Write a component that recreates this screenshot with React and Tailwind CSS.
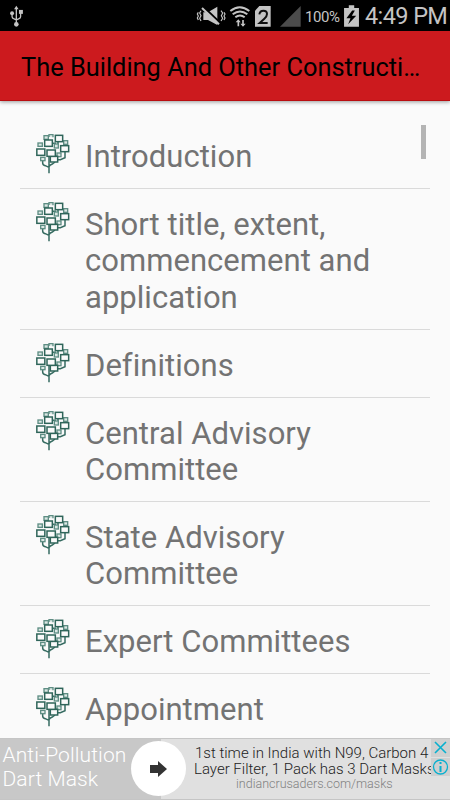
import React from 'react';

const sections = [
  ['Introduction'],
  ['Short title, extent,', 'commencement and', 'application'],
  ['Definitions'],
  ['Central Advisory', 'Committee'],
  ['State Advisory', 'Committee'],
  ['Expert Committees'],
  ['Appointment'],
];

function TreeIcon() {
  return (
    <svg viewBox="33 33 102 123" className="h-[41px] w-[34px] shrink-0" fill="none">
      <g strokeWidth="4.5" stroke="#366b61">
        <path d="M72 154V104M53 116v7q0 6 8 8l11 5M72 134q2-5 10-8l8-6M97 113h9l14-6V90M90 103h17M83 64h10M99 58v14" />
      </g>
      <g strokeWidth="4" stroke="#5f8e84" fill="#dce8e5">
        <rect x="39" y="63" width="13" height="10" />
        <rect x="57" y="41" width="13" height="11" />
        <path d="M72 45v-7h12v8" />
        <rect x="88" y="66" width="12" height="12" />
        <rect x="116" y="56" width="12" height="11" />
        <rect x="47" y="106" width="13" height="10" />
        <rect x="96" y="93" width="12" height="11" />
      </g>
      <g strokeWidth="4.5" stroke="#2f655a" fill="#fafafa">
        <rect x="76" y="103" width="22" height="17" />
        <rect x="91" y="40" width="22" height="19" />
        <rect x="59" y="54" width="23" height="19" />
        <rect x="107" y="71" width="24" height="18" />
        <rect x="35.5" y="81" width="24" height="19" />
        <rect x="66" y="84" width="25" height="19" />
      </g>
    </svg>
  );
}

function StatusBar() {
  return (
    <div className="flex h-[31px] items-start bg-black text-[#c4c4c4]">
      <svg viewBox="27 15 45 67" className="mt-[5px] ml-[9px] h-[22px] w-[15px] shrink-0" fill="none" stroke="#c4c4c4" strokeWidth="4">
        <path d="M49 76V24M36 41v10q0 5 6 6l7 3M62 36v15q0 5-6 6l-7 3" />
        <g fill="#c4c4c4" stroke="none">
          <path d="M42 28l7-11 7 11z" />
          <circle cx="36" cy="40" r="6" />
          <path d="M57 30h12v12H57z" />
          <circle cx="49" cy="74" r="7" />
        </g>
      </svg>

      <svg viewBox="18 12 318 72" className="mt-[4px] ml-[172px] h-[24px] w-[106px] shrink-0" fill="none" stroke="#c4c4c4">
        <path d="M40 37h14l28-17v55L54 60H40z" fill="#c4c4c4" stroke="none" />
        <path d="M40 20l52 50" stroke="#000" strokeWidth="6" />
        <path d="M36 24l51 49" strokeWidth="6" />
        <path d="M33 32l-4 7 4 8-4 8 4 8M25 37l-3 5 3 6-3 6 3 6M93 32l5 7-4 8 4 8-5 8M102 37l3 5-3 6 3 6-3 6" strokeWidth="3.5" />
        <path d="M121 33q28-23 57 0M128 43q22-17 44 0M136 52q14-11 28 0" strokeWidth="6" />
        <path d="M145 79V62M159 60v17" strokeWidth="5" />
        <path d="M137 67l8-9 7 9zM151 71l8 9 8-9z" fill="#c4c4c4" stroke="none" />
        <path d="M208 18h34v62h-47V32z" fill="#c4c4c4" stroke="none" />
        <path d="M208 43q2-11 12-11 11 0 11 10 0 7-8 14l-14 13h24" stroke="#111" strokeWidth="6" />
        <path d="M332 18v62h-62z" fill="#4b4b4b" stroke="none" />
      </svg>

      <span className="mt-[7px] ml-[3px] w-[37px] shrink-0 whitespace-nowrap text-[15px] leading-[20px] tracking-[-0.4px]">100%</span>
      <svg viewBox="132 14 44 65" className="mt-[5px] ml-[2px] h-[22px] w-[15px] shrink-0">
        <path d="M146 15h16v8h14v55h-44V23h14z" fill="#c4c4c4" />
        <path d="M156 30l-17 23h12l-7 18 24-25h-13l9-16z" fill="#000" />
      </svg>
      <span className="ml-[6px] whitespace-nowrap text-[23.5px] leading-[33px] tracking-[-0.6px]">4:49 PM</span>
    </div>
  );
}

function AdBanner() {
  return (
    <div className="relative flex h-[62px] border-y border-[#c5c5c5] bg-[#e0e0e0] font-light">
      <div className="w-[161px] bg-[#c8c8c8] pt-[4px] pl-[2.5px] text-[21px] leading-[24px] tracking-[0.1px] whitespace-nowrap text-white">
        <p>Anti-Pollution</p>
        <p>Dart Mask</p>
      </div>
      <div className="w-[273px] pt-[6px] whitespace-nowrap text-[#222]">
        <p className="pl-[34px] text-[15px] leading-[16px]">1st time in India with N99, Carbon 4</p>
        <p className="pl-[33px] text-[15px] leading-[16px]">Layer Filter, 1 Pack has 3 Dart Masks</p>
        <p className="pl-[75px] text-[12.5px] leading-[14px] text-[#808080]">indiancrusaders.com/masks</p>
      </div>
      <div className="absolute top-[2px] left-[131px] grid h-[55px] w-[55px] place-content-center rounded-full bg-white">
        <svg viewBox="0 0 18 16" className="mr-[2px] h-[16px] w-[18px]" fill="#333">
          <path d="M1 4h8V0l9 8-9 8v-4H1z" />
        </svg>
      </div>
      <div className="absolute top-0 right-0 flex w-[19px] flex-col gap-px">
        <svg viewBox="0 0 19 18" className="h-[18px] w-[19px] bg-[#cfcfcf]" fill="none" stroke="#08b0cf" strokeWidth="1.6">
          <path d="M4 3l11 11M15 3L4 14" />
        </svg>
        <svg viewBox="0 0 19 18" className="h-[18px] w-[19px] bg-[#cfcfcf]" fill="none" stroke="#08b0cf">
          <circle cx="9.5" cy="9" r="7" strokeWidth="1.3" />
          <path d="M9.5 8v6M9.5 4v2" strokeWidth="2" />
        </svg>
      </div>
    </div>
  );
}

function App() {
  return (
    <div className="flex h-[800px] w-[450px] flex-col overflow-hidden bg-[#fafafa] font-['Roboto',sans-serif]">
      <StatusBar />
      <header className="z-10 h-[70px] shrink-0 border-b border-[#b90d10] bg-[#cc1a1e] pl-[21px] shadow-[0_1px_4px_rgba(0,0,0,0.4)]">
        <h1 className="pt-[1px] text-[25.4px] leading-[70px] whitespace-nowrap text-black">
          The Building And Other Constructi…
        </h1>
      </header>

      <main className="relative h-[637px] overflow-hidden px-[20px] pt-[20px]">
        <ul>
          {sections.map((lines) => (
            <li key={lines[0]} className="flex border-b border-[#dadada] pt-[12px] pb-[12.5px] pl-[16px]">
              <TreeIcon />
              <div className="pt-[6px] pl-[15px] text-[31px] leading-[36.4px] tracking-[0.04px] whitespace-nowrap text-[#737373]">
                {lines.map((line) => (
                  <p key={line}>{line}</p>
                ))}
              </div>
            </li>
          ))}
        </ul>
        <div className="absolute top-[24px] right-[24px] h-[34px] w-[5px] bg-[#b4b4b4]" />
      </main>

      <AdBanner />
    </div>
  );
}

export default App;
